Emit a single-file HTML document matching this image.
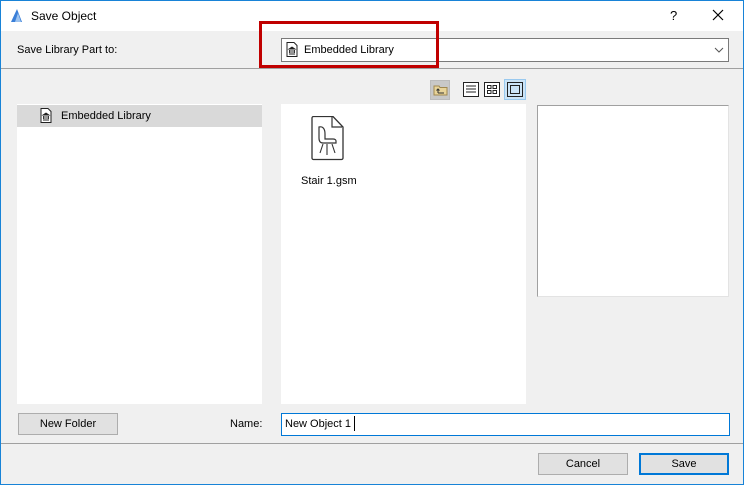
<!DOCTYPE html>
<html><head><style>
*{margin:0;padding:0;box-sizing:border-box}
body{width:744px;height:485px;overflow:hidden;font-family:"Liberation Sans",sans-serif;font-size:11px;color:#000;background:#f0f0f0}
.win{position:absolute;left:0;top:0;width:744px;height:485px;background:#f0f0f0}
.a{position:absolute}
.title{left:0;top:0;width:744px;height:31px;background:#fff}
.btn{position:absolute;background:#e1e1e1;border:1px solid #adadad;text-align:center;line-height:20px}
</style></head><body>
<div class="win">
<div class="a title"></div>
<svg class="a" style="left:10px;top:7px" width="14" height="16"><path d="M1 15 L7 2 L12 15 Z" fill="#3a7fd8"/><path d="M5 15 L8 6 L11 15Z" fill="#9cc3f0"/></svg>
<div class="a" style="left:31px;top:9px;font-size:12px">Save Object</div>
<div class="a" style="left:670px;top:8px;font-size:13px">?</div>
<svg class="a" style="left:712px;top:9px" width="12" height="12"><path d="M1 1L11 11M11 1L1 11" stroke="#000" stroke-width="1.2"/></svg>
<div class="a" style="left:17px;top:44px">Save Library Part to:</div>
<div class="a" style="left:281px;top:38px;width:448px;height:24px;background:#fff;border:1px solid #7a7a7a"></div>
<svg class="a" style="left:286px;top:42px" width="12" height="15"><path d="M1 .5H8L11 3.5V14.5H1Z" fill="#fff" stroke="#222"/><path d="M3 7L6 5L9 7ZM3.5 8V11M5 8V11M7 8V11M8.5 8V11M3 12H9" stroke="#222" fill="#222" stroke-width=".9"/></svg>
<div class="a" style="left:304px;top:44px">Embedded Library</div>
<svg class="a" style="left:714px;top:47px" width="10" height="6"><path d="M1 1L5 5L9 1" stroke="#555" fill="none"/></svg>
<div class="a" style="left:259px;top:21px;width:180px;height:47px;border:3px solid #c00000"></div>
<div class="a" style="left:0;top:68px;width:744px;height:1px;background:#a0a0a0"></div>
<div class="a" style="left:430px;top:80px;width:20px;height:20px;background:#c8c8c8;border:1px solid #bbb"></div>
<svg class="a" style="left:433px;top:84px" width="15" height="12"><path d="M1 2H6L7 3.5H14V11H1Z" fill="#e8d49a" stroke="#a08850"/><path d="M5 9H11M5 9V5M3.5 6.5L5 5L6.5 6.5" stroke="#333" fill="none"/></svg>
<svg class="a" style="left:463px;top:82px" width="17" height="16"><rect x=".5" y=".5" width="15" height="14" fill="#fff" stroke="#222"/><path d="M3 4H13M3 7H13M3 10H13" stroke="#222"/></svg>
<svg class="a" style="left:484px;top:82px" width="17" height="16"><rect x=".5" y=".5" width="15" height="14" fill="#fff" stroke="#222"/><rect x="3.5" y="3.5" width="3.5" height="3" fill="none" stroke="#222"/><rect x="9" y="3.5" width="3.5" height="3" fill="none" stroke="#222"/><rect x="3.5" y="8.5" width="3.5" height="3" fill="none" stroke="#222"/><rect x="9" y="8.5" width="3.5" height="3" fill="none" stroke="#222"/></svg>
<div class="a" style="left:504px;top:79px;width:22px;height:21px;background:#cce4f7;border:1px solid #99c9ef"></div>
<svg class="a" style="left:507px;top:82px" width="17" height="16"><rect x=".5" y=".5" width="15" height="14" fill="none" stroke="#222"/><rect x="3.5" y="3.5" width="9" height="8" fill="none" stroke="#222"/></svg>
<div class="a" style="left:17px;top:104px;width:245px;height:300px;background:#fff"></div>
<div class="a" style="left:17px;top:105px;width:245px;height:22px;background:#d9d9d9"></div>
<svg class="a" style="left:40px;top:108px" width="12" height="15"><path d="M1 .5H8L11 3.5V14.5H1Z" fill="#fff" stroke="#222"/><path d="M3 7L6 5L9 7ZM3.5 8V11M5 8V11M7 8V11M8.5 8V11M3 12H9" stroke="#222" fill="#222" stroke-width=".9"/></svg>
<div class="a" style="left:61px;top:110px">Embedded Library</div>
<div class="a" style="left:281px;top:104px;width:245px;height:300px;background:#fff"></div>
<svg class="a" style="left:311px;top:116px" width="34" height="46"><path d="M1 2a1.5 1.5 0 0 1 1.5-1.5H22L32 11V42a1.5 1.5 0 0 1-1.5 1.5H2.5A1.5 1.5 0 0 1 1 42Z" fill="#fff" stroke="#333" stroke-width="1.3"/><path d="M21 1V11H31" fill="none" stroke="#333" stroke-width="1.2"/><path d="M8 11c4-1 6 2 6 7v5h8c2 0 3 1 3 2v2H12c-3 0-4-2-4-5Z" fill="#fff" stroke="#333" stroke-width="1.2"/><path d="M12 28L9 37M16 28V39M21 28L24 37" stroke="#333" stroke-width="1.1"/></svg>
<div class="a" style="left:301px;top:175px">Stair 1.gsm</div>
<div class="a" style="left:537px;top:105px;width:192px;height:192px;background:#fff;border:1px solid #a0a0a0;border-right-color:#e3e3e3;border-bottom-color:#e3e3e3"></div>
<div class="btn" style="left:18px;top:413px;width:100px;height:22px">New Folder</div>
<div class="a" style="left:230px;top:418px">Name:</div>
<div class="a" style="left:281px;top:413px;width:449px;height:23px;background:#fff;border:1px solid #0078d7"></div>
<div class="a" style="left:285px;top:418px">New Object 1</div>
<div class="a" style="left:354px;top:416px;width:1px;height:15px;background:#000"></div>
<div class="a" style="left:0;top:443px;width:744px;height:1px;background:#a0a0a0"></div>
<div class="btn" style="left:538px;top:453px;width:90px;height:22px">Cancel</div>
<div class="btn" style="left:639px;top:453px;width:90px;height:22px;border:2px solid #0078d7;line-height:18px">Save</div>
</div>
<div class="a" style="left:0;top:0;width:744px;height:485px;border:1px solid #1883d7"></div>
</body></html>
